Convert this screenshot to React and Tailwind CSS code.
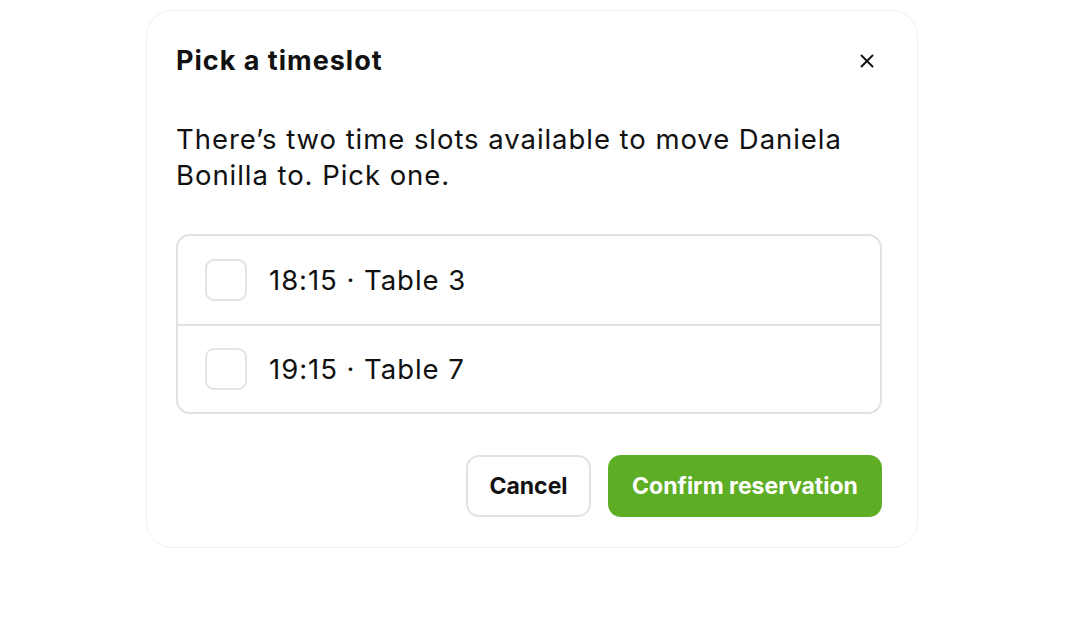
export default function App() {
  const slots = ["18:15 · Table 3", "19:15 · Table 7"];

  return (
    <div className="w-[1066px] h-[644px] bg-white font-['Inter',sans-serif] text-[#111]">
      <div className="pt-[10px] pl-[146px]">
        <div className="w-[772px] rounded-[26px] border border-[#f1f1f1] pl-[29px] pr-[35px] pt-[29px] pb-[30px]">
          {/* Header */}
          <div className="flex items-center justify-between">
            <h2 className="text-[27px] leading-[42px] font-bold tracking-[1px]">
              Pick a timeslot
            </h2>
            <button className="w-[30px] h-[30px] flex items-center justify-center">
              <svg width="14" height="14" viewBox="0 0 14 14" fill="none">
                <path
                  d="M1.5 1.5L12.5 12.5M12.5 1.5L1.5 12.5"
                  stroke="#111"
                  strokeWidth="1.9"
                  strokeLinecap="round"
                />
              </svg>
            </button>
          </div>

          <p className="mt-[39px] text-[27.5px] leading-[36px] tracking-[0.95px] pr-[20px]">
            There’s two time slots available to move Daniela Bonilla to. Pick
            one.
          </p>

          {/* Options */}
          <div className="mt-[41px] rounded-[14px] border-2 border-[#e2e2e2]">
            {slots.map((s, i) => (
              <label
                key={s}
                className={`flex items-center h-[88px] pl-[27px] ${
                  i > 0 ? "border-t-2 border-[#e2e2e2]" : ""
                }`}
              >
                <span className="w-[42px] h-[42px] rounded-[9px] border-2 border-[#e4e4e4] bg-white" />
                <span className="ml-[22px] text-[27.5px] leading-[36px] tracking-[0.95px]">
                  {s}
                </span>
              </label>
            ))}
          </div>

          {/* Actions */}
          <div className="mt-[41px] flex justify-end gap-[17px]">
            <button className="h-[62px] w-[125px] rounded-[13px] border-2 border-[#e2e2e2] bg-white text-[23px] font-bold text-[#111]">
              Cancel
            </button>
            <button className="h-[62px] w-[274px] rounded-[13px] bg-[#5eae25] text-[23px] font-bold text-white">
              Confirm reservation
            </button>
          </div>
        </div>
      </div>
    </div>
  );
}
